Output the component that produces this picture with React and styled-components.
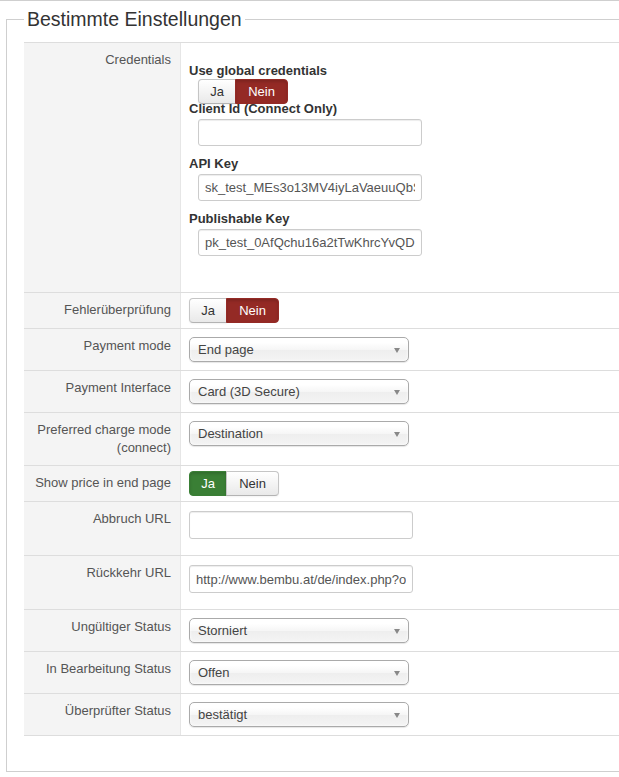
import React from 'react';
import styled, { createGlobalStyle } from 'styled-components';

const GlobalStyle = createGlobalStyle`
  html, body {
    margin: 0;
    padding: 0;
    background: #fff;
    overflow: hidden;
  }
  body {
    font-family: "Liberation Sans", Arial, sans-serif;
    font-size: 13px;
    color: #333;
  }
  * { box-sizing: border-box; }
`;

const Page = styled.div`
  width: 720px;
  border-top: 1px solid #cfcfcf;
  padding: 6px 0 0 6px;
`;

const Fieldset = styled.fieldset`
  margin: 0;
  min-width: 0;
  border: 1px solid #cfcfcf;
  padding: 11px 0 35px 17px;
`;

const Legend = styled.legend`
  padding: 0 3px;
  font-size: 19.5px;
  line-height: 24px;
  font-weight: normal;
  color: #333;
`;

const Table = styled.div`
  border-top: 1px solid #ddd;
`;

const Row = styled.div`
  display: grid;
  grid-template-columns: 157px 1fr;
  border-bottom: 1px solid #ddd;
`;

const KeyCell = styled.div`
  background: #f4f4f4;
  border-right: 1px solid #e6e6e6;
  padding: 8px 9px 8px 8px;
  text-align: right;
  line-height: 18px;
  color: #555;
`;

const ValueCell = styled.div`
  padding: ${(p) => p.$pad || '5px 8px'};
`;

const FieldLabel = styled.div`
  font-weight: bold;
  line-height: 18px;
  color: #333;
`;

const ToggleGroup = styled.div`
  display: inline-flex;
  vertical-align: top;
  margin: ${(p) => p.$margin || '0'};
`;

const toneColor = { red: '#942a25', green: '#3a7f35' };

const ToggleButton = styled.span`
  display: inline-flex;
  align-items: center;
  justify-content: center;
  width: ${(p) => p.$w}px;
  height: 25px;
  font-size: 13px;
  border: 1px solid ${(p) => (p.$active ? toneColor[p.$tone] : '#c5c5c5')};
  border-bottom-color: ${(p) => (p.$active ? toneColor[p.$tone] : '#b3b3b3')};
  background: ${(p) =>
    p.$active ? toneColor[p.$tone] : 'linear-gradient(#ffffff, #e9e9e9)'};
  color: ${(p) => (p.$active ? '#fff' : '#333')};
  box-shadow: ${(p) =>
    p.$active
      ? 'inset 0 2px 3px rgba(0,0,0,0.15)'
      : 'inset 0 1px 0 rgba(255,255,255,0.3), 0 1px 2px rgba(0,0,0,0.05)'};
  &:first-child {
    border-radius: 4px 0 0 4px;
  }
  &:last-child {
    border-radius: 0 4px 4px 0;
    margin-left: -1px;
  }
`;

const TextInput = styled.input`
  display: block;
  width: 224px;
  height: ${(p) => p.$h || 28}px;
  margin: ${(p) => p.$margin || '4px 0 11px'};
  padding: 0 6px;
  border: 1px solid #ccc;
  border-radius: 3px;
  box-shadow: inset 0 1px 1px rgba(0, 0, 0, 0.075);
  font-family: "Liberation Sans", Arial, sans-serif;
  font-size: 13px;
  color: #555;
  background: #fff;
  outline: none;
`;

const SelectBox = styled.div`
  position: relative;
  width: 220px;
  height: 25px;
  margin: 3px 0;
  padding: 0 24px 0 8px;
  border: 1px solid #aaa;
  border-radius: 5px;
  background: linear-gradient(#ffffff 20%, #f6f6f6 50%, #eeeeee 52%, #f4f4f4 100%);
  box-shadow: inset 0 0 3px #fff, 0 1px 1px rgba(0, 0, 0, 0.1);
  line-height: 24px;
  font-size: 13px;
  color: #444;
  white-space: nowrap;
  overflow: hidden;
`;

const Caret = styled.span`
  position: absolute;
  right: 8px;
  top: 10px;
  width: 0;
  height: 0;
  border-left: 3.5px solid transparent;
  border-right: 3.5px solid transparent;
  border-top: 5px solid #888;
`;

const Toggle = ({ value, margin }) => (
  <ToggleGroup $margin={margin}>
    <ToggleButton $w={38} $active={value === 'yes'} $tone="green">Ja</ToggleButton>
    <ToggleButton $w={53} $active={value === 'no'} $tone="red">Nein</ToggleButton>
  </ToggleGroup>
);

const Select = ({ value }) => (
  <SelectBox>
    {value}
    <Caret />
  </SelectBox>
);

const fields = [
  { label: 'Fehlerüberprüfung', type: 'toggle', value: 'no' },
  { label: 'Payment mode', type: 'select', value: 'End page' },
  { label: 'Payment Interface', type: 'select', value: 'Card (3D Secure)' },
  { label: 'Preferred charge mode (connect)', type: 'select', value: 'Destination' },
  { label: 'Show price in end page', type: 'toggle', value: 'yes' },
  { label: 'Abbruch URL', type: 'text', value: '' },
  {
    label: 'Rückkehr URL',
    type: 'text',
    value:
      'http://www.bembu.at/de/index.php?option=com_virtuemart&view=pluginresponse&task=pluginresponsereceived',
  },
  { label: 'Ungültiger Status', type: 'select', value: 'Storniert' },
  { label: 'In Bearbeitung Status', type: 'select', value: 'Offen' },
  { label: 'Überprüfter Status', type: 'select', value: 'bestätigt' },
];

const renderControl = (f) => {
  if (f.type === 'toggle') return <Toggle value={f.value} />;
  if (f.type === 'select') return <Select value={f.value} />;
  return <TextInput type="text" defaultValue={f.value} readOnly />;
};

export default function App() {
  return (
    <>
      <GlobalStyle />
      <Page>
        <Fieldset>
          <Legend>Bestimmte Einstellungen</Legend>
          <Table>
            <Row>
              <KeyCell>Credentials</KeyCell>
              <ValueCell $pad="19px 8px 27px">
                <FieldLabel>Use global credentials</FieldLabel>
                <Toggle value="no" margin="-1px 0 -4px 9px" />
                <FieldLabel>Client Id (Connect Only)</FieldLabel>
                <TextInput type="text" defaultValue="" readOnly $h={27} $margin="1px 0 9px 9px" />
                <FieldLabel>API Key</FieldLabel>
                <TextInput
                  type="text"
                  defaultValue="sk_test_MEs3o13MV4iyLaVaeuuQbS7xk2pRw"
                  readOnly
                  $h={27}
                  $margin="1px 0 9px 9px"
                />
                <FieldLabel>Publishable Key</FieldLabel>
                <TextInput
                  type="text"
                  defaultValue="pk_test_0AfQchu16a2tTwKhrcYvQD"
                  readOnly
                  $h={27}
                  $margin="1px 0 9px 9px"
                />
              </ValueCell>
            </Row>
            {fields.map((f) => (
              <Row key={f.label}>
                <KeyCell>{f.label}</KeyCell>
                <ValueCell>{renderControl(f)}</ValueCell>
              </Row>
            ))}
          </Table>
        </Fieldset>
      </Page>
    </>
  );
}
